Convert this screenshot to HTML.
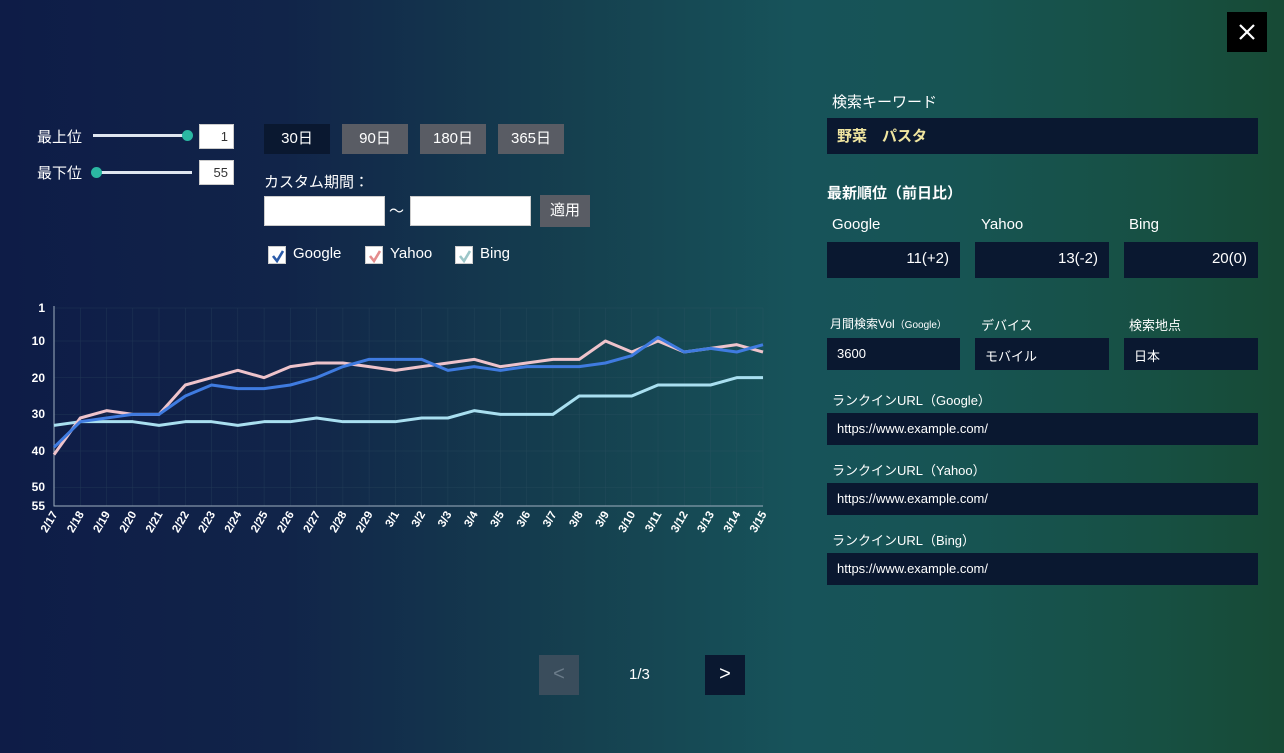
<!DOCTYPE html>
<html><head><meta charset="utf-8">
<style>
*{margin:0;padding:0;box-sizing:border-box}
body{width:1284px;height:753px;overflow:hidden;position:relative;font-family:"Liberation Sans","Noto Sans CJK JP",sans-serif;color:#fff;
background:linear-gradient(90deg,#0e1c47 0%,#112449 22%,#15404f 45%,#17535a 62%,#175453 75%,#175043 90%,#174a35 100%);}
.a{position:absolute}
.box{position:absolute;background:#0a1830;color:#fff}
.btn{position:absolute;height:30px;top:124px;width:66px;background:#595c64;font-size:15px;text-align:center;line-height:30px}
.lbl{position:absolute;font-size:15px}
.sm{position:absolute;font-size:13px}
.in{position:absolute;background:#fff;border:1px solid #ccc}
.cb{position:absolute;top:246px;width:18px;height:18px;background:#fff;border:1px solid #ccc}
.cb svg{position:absolute;left:2px;top:2px}
</style></head><body>
<div class="a" style="left:1227px;top:12px;width:40px;height:40px;background:#000">
<svg width="40" height="40"><path d="M13 13L27 27M27 13L13 27" stroke="#fff" stroke-width="2.2"/></svg></div>

<div class="lbl" style="left:37px;top:126px">最上位</div>
<div class="a" style="left:93px;top:134px;width:94px;height:3px;background:#dfe6f0"></div>
<div class="a" style="left:182px;top:130px;width:11px;height:11px;border-radius:50%;background:#2bb7a2"></div>
<div class="in" style="left:199px;top:124px;width:35px;height:25px;font-size:13px;color:#333;text-align:right;padding-right:5px;line-height:23px">1</div>
<div class="lbl" style="left:37px;top:162px">最下位</div>
<div class="a" style="left:96px;top:171px;width:96px;height:3px;background:#dfe6f0"></div>
<div class="a" style="left:91px;top:167px;width:11px;height:11px;border-radius:50%;background:#2bb7a2"></div>
<div class="in" style="left:199px;top:160px;width:35px;height:25px;font-size:13px;color:#333;text-align:right;padding-right:5px;line-height:23px">55</div>

<div class="btn" style="left:264px;background:#0a1830">30日</div>
<div class="btn" style="left:342px">90日</div>
<div class="btn" style="left:420px">180日</div>
<div class="btn" style="left:498px">365日</div>
<div class="lbl" style="left:264px;top:171px">カスタム期間：</div>
<div class="in" style="left:264px;top:196px;width:121px;height:30px"></div>
<div class="lbl" style="left:389px;top:200px">〜</div>
<div class="in" style="left:410px;top:196px;width:121px;height:30px"></div>
<div class="a" style="left:540px;top:195px;width:50px;height:32px;background:#595c64;font-size:15px;text-align:center;line-height:32px">適用</div>

<div class="cb" style="left:268px"><svg width="14" height="14"><path d="M2 7L6 12L12 2" stroke="#2a5aa8" stroke-width="2.6" fill="none"/></svg></div>
<div class="lbl" style="left:293px;top:245px">Google</div>
<div class="cb" style="left:365px"><svg width="14" height="14"><path d="M2 7L6 12L12 2" stroke="#e48c8c" stroke-width="2.6" fill="none"/></svg></div>
<div class="lbl" style="left:390px;top:245px">Yahoo</div>
<div class="cb" style="left:455px"><svg width="14" height="14"><path d="M2 7L6 12L12 2" stroke="#9cc6c8" stroke-width="2.6" fill="none"/></svg></div>
<div class="lbl" style="left:480px;top:245px">Bing</div>

<svg class="a" style="left:0;top:0" width="800" height="560">
<g stroke="#3a5a6a" stroke-width="0.5" opacity="0.4">
<path d="M54 308H763M54 341H763M54 377.7H763M54 414.3H763M54 451H763M54 487.7H763"/>
<path d="M80.3 308V506M106.5 308V506M132.8 308V506M159 308V506M185.3 308V506M211.6 308V506M237.8 308V506M264.1 308V506M290.3 308V506M316.6 308V506M342.9 308V506M369.1 308V506M395.4 308V506M421.6 308V506M447.9 308V506M474.2 308V506M500.4 308V506M526.7 308V506M552.9 308V506M579.2 308V506M605.5 308V506M631.7 308V506M658 308V506M684.2 308V506M710.5 308V506M736.8 308V506M763 308V506"/>
</g>
<path d="M54 306V506H763" stroke="#9fb0c0" stroke-width="1" fill="none"/>
<g font-size="12" font-weight="bold" fill="#fff" text-anchor="end">
<text x="45" y="312">1</text><text x="45" y="345">10</text><text x="45" y="382">20</text><text x="45" y="418">30</text><text x="45" y="455">40</text><text x="45" y="491">50</text><text x="45" y="510">55</text>
</g>
<g transform="translate(54,304.33) scale(26.26,3.667)" fill="none" stroke-linejoin="round">
<polyline vector-effect="non-scaling-stroke" stroke="#a9dff0" stroke-width="3" points="0,33 1,32 2,32 3,32 4,33 5,32 6,32 7,33 8,32 9,32 10,31 11,32 12,32 13,32 14,31 15,31 16,29 17,30 18,30 19,30 20,25 21,25 22,25 23,22 24,22 25,22 26,20 27,20"/>
<polyline vector-effect="non-scaling-stroke" stroke="#eec3cb" stroke-width="3" points="0,41 1,31 2,29 3,30 4,30 5,22 6,20 7,18 8,20 9,17 10,16 11,16 12,17 13,18 14,17 15,16 16,15 17,17 18,16 19,15 20,15 21,10 22,13 23,10 24,13 25,12 26,11 27,13"/>
<polyline vector-effect="non-scaling-stroke" stroke="#3f7be0" stroke-width="3" points="0,39 1,32 2,31 3,30 4,30 5,25 6,22 7,23 8,23 9,22 10,20 11,17 12,15 13,15 14,15 15,18 16,17 17,18 18,17 19,17 20,17 21,16 22,14 23,9 24,13 25,12 26,13 27,11"/>
</g>
<g font-size="11.5" font-weight="bold" fill="#fff" text-anchor="end">
<text transform="translate(58,514) rotate(-60)">2/17</text><text transform="translate(84.3,514) rotate(-60)">2/18</text><text transform="translate(110.5,514) rotate(-60)">2/19</text><text transform="translate(136.8,514) rotate(-60)">2/20</text><text transform="translate(163,514) rotate(-60)">2/21</text><text transform="translate(189.3,514) rotate(-60)">2/22</text><text transform="translate(215.6,514) rotate(-60)">2/23</text><text transform="translate(241.8,514) rotate(-60)">2/24</text><text transform="translate(268.1,514) rotate(-60)">2/25</text><text transform="translate(294.3,514) rotate(-60)">2/26</text><text transform="translate(320.6,514) rotate(-60)">2/27</text><text transform="translate(346.9,514) rotate(-60)">2/28</text><text transform="translate(373.1,514) rotate(-60)">2/29</text><text transform="translate(399.4,514) rotate(-60)">3/1</text><text transform="translate(425.6,514) rotate(-60)">3/2</text><text transform="translate(451.9,514) rotate(-60)">3/3</text><text transform="translate(478.2,514) rotate(-60)">3/4</text><text transform="translate(504.4,514) rotate(-60)">3/5</text><text transform="translate(530.7,514) rotate(-60)">3/6</text><text transform="translate(556.9,514) rotate(-60)">3/7</text><text transform="translate(583.2,514) rotate(-60)">3/8</text><text transform="translate(609.5,514) rotate(-60)">3/9</text><text transform="translate(635.7,514) rotate(-60)">3/10</text><text transform="translate(662,514) rotate(-60)">3/11</text><text transform="translate(688.2,514) rotate(-60)">3/12</text><text transform="translate(714.5,514) rotate(-60)">3/13</text><text transform="translate(740.8,514) rotate(-60)">3/14</text><text transform="translate(767,514) rotate(-60)">3/15</text>
</g>
</svg>

<div class="a" style="left:539px;top:655px;width:40px;height:40px;background:#3a4d5c;color:#6b7c8a;font-size:20px;text-align:center;line-height:38px">&lt;</div>
<div class="a" style="left:629px;top:666px;font-size:15px">1/3</div>
<div class="a" style="left:705px;top:655px;width:40px;height:40px;background:#0a1830;font-size:20px;text-align:center;line-height:38px">&gt;</div>

<div class="lbl" style="left:832px;top:91px">検索キーワード</div>
<div class="box" style="left:827px;top:118px;width:431px;height:36px;color:#f0e6a0;font-weight:bold;font-size:15px;padding:7px 10px">野菜　パスタ</div>
<div class="lbl" style="left:827px;top:182px;font-weight:bold">最新順位（前日比）</div>
<div class="lbl" style="left:832px;top:216px">Google</div>
<div class="lbl" style="left:981px;top:216px">Yahoo</div>
<div class="lbl" style="left:1129px;top:216px">Bing</div>
<div class="box" style="left:827px;top:242px;width:133px;height:36px;text-align:right;padding:8px 11px;font-size:15px">11(+2)</div>
<div class="box" style="left:975px;top:242px;width:134px;height:36px;text-align:right;padding:8px 11px;font-size:15px">13(-2)</div>
<div class="box" style="left:1124px;top:242px;width:134px;height:36px;text-align:right;padding:8px 11px;font-size:15px">20(0)</div>
<div class="sm" style="left:830px;top:315px;font-size:12px">月間検索Vol<span style="font-size:10px">（Google）</span></div>
<div class="sm" style="left:981px;top:315px">デバイス</div>
<div class="sm" style="left:1129px;top:315px">検索地点</div>
<div class="box" style="left:827px;top:338px;width:133px;height:32px;font-size:13px;padding:8px 10px">3600</div>
<div class="box" style="left:975px;top:338px;width:134px;height:32px;font-size:13px;padding:8px 10px">モバイル</div>
<div class="box" style="left:1124px;top:338px;width:134px;height:32px;font-size:13px;padding:8px 10px">日本</div>
<div class="sm" style="left:832px;top:390px">ランクインURL（Google）</div>
<div class="box" style="left:827px;top:413px;width:431px;height:32px;font-size:13px;padding:8px 10px">https://www.example.com/</div>
<div class="sm" style="left:832px;top:460px">ランクインURL（Yahoo）</div>
<div class="box" style="left:827px;top:483px;width:431px;height:32px;font-size:13px;padding:8px 10px">https://www.example.com/</div>
<div class="sm" style="left:832px;top:530px">ランクインURL（Bing）</div>
<div class="box" style="left:827px;top:553px;width:431px;height:32px;font-size:13px;padding:8px 10px">https://www.example.com/</div>
</body></html>
